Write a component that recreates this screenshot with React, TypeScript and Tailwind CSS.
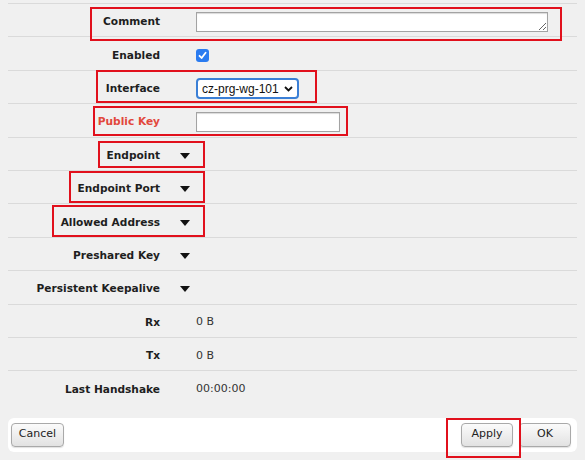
import React from 'react';

const Triangle = () => (
  <svg width="10" height="6" viewBox="0 0 10 6" className="block">
    <path d="M0 0 L10 0 L5 6 Z" fill="#111" />
  </svg>
);

interface RowProps {
  label: string;
  red?: boolean;
  children?: React.ReactNode;
  expand?: boolean;
}

const Row: React.FC<RowProps> = ({ label, red, children, expand }) => (
  <div className="h-[33.4px] border-t border-[#dadada] flex items-center pt-[4px]">
    <div className={`w-[152px] shrink-0 text-right font-bold text-[10.6px] ${red ? 'text-[#e2483c]' : 'text-[#1e1e1e]'}`}>
      {label}
    </div>
    {expand ? (
      <div className="ml-[20px]"><Triangle /></div>
    ) : (
      <div className="ml-[36px] flex items-center">{children}</div>
    )}
  </div>
);

const Btn: React.FC<{ children: React.ReactNode; className?: string }> = ({ children, className }) => (
  <button
    type="button"
    className={`h-[24px] rounded-[4px] border border-[#a9a9a9] bg-gradient-to-b from-[#fbfbfb] to-[#e2e2e2] text-[11px] text-[#222] shadow-[0_1px_1px_rgba(0,0,0,0.12)] ${className ?? ''}`}
  >
    {children}
  </button>
);

const Box: React.FC<{ className: string }> = ({ className }) => (
  <div className={`absolute border-2 border-[#e1101c] pointer-events-none ${className}`} />
);

export default function App() {
  return (
    <div
      className="relative w-[585px] h-[460px] bg-[#f0f0f0] px-2 pt-[3px] overflow-hidden"
      style={{ fontFamily: '"DejaVu Sans", Verdana, sans-serif' }}
    >
      <Row label="Comment">
        <textarea
          rows={1}
          className="block w-[352px] h-[20px] bg-white border border-[#a3a3a3] shadow-[inset_0_1px_1px_rgba(0,0,0,0.15)] resize"
        />
      </Row>
      <Row label="Enabled">
        <div className="w-[13px] h-[13px] rounded-[3px] bg-[#2a7bf0] flex items-center justify-center">
          <svg width="9" height="9" viewBox="0 0 9 9">
            <path d="M1.5 4.8 L3.6 7 L7.6 1.8" fill="none" stroke="#fff" strokeWidth="1.8" strokeLinecap="round" strokeLinejoin="round" />
          </svg>
        </div>
      </Row>
      <Row label="Interface">
        <div className="w-[103px] h-[21px] rounded-[4px] border-2 border-[#3a7fd6] bg-white flex items-center justify-between pl-[4px] pr-[4px]">
          <span className="text-[12px] text-[#111]" style={{ fontFamily: '"Liberation Sans", Arial, sans-serif' }}>cz-prg-wg-101</span>
          <svg width="9" height="6" viewBox="0 0 9 6">
            <path d="M1 1 L4.5 4.5 L8 1" fill="none" stroke="#111" strokeWidth="1.8" />
          </svg>
        </div>
      </Row>
      <Row label="Public Key" red>
        <input
          type="text"
          className="block w-[144px] h-[20px] bg-white border border-[#a3a3a3] shadow-[inset_0_1px_1px_rgba(0,0,0,0.15)]"
        />
      </Row>
      <Row label="Endpoint" expand />
      <Row label="Endpoint Port" expand />
      <Row label="Allowed Address" expand />
      <Row label="Preshared Key" expand />
      <Row label="Persistent Keepalive" expand />
      <Row label="Rx"><span className="text-[11px] text-[#333]">0 B</span></Row>
      <Row label="Tx"><span className="text-[11px] text-[#333]">0 B</span></Row>
      <Row label="Last Handshake"><span className="text-[11px] text-[#333]">00:00:00</span></Row>

      <div className="mt-[14px] h-[34px] bg-white rounded-[6px] flex items-center pl-[3px] pr-[6px]">
        <Btn className="w-[53px]">Cancel</Btn>
        <div className="flex-1" />
        <Btn className="w-[52px]">Apply</Btn>
        <Btn className="w-[52px] ml-[6px]">OK</Btn>
      </div>

      <Box className="left-[90px] top-[7px] w-[472px] h-[34px]" />
      <Box className="left-[96px] top-[70px] w-[221px] h-[33px]" />
      <Box className="left-[93px] top-[106px] w-[255px] h-[30px]" />
      <Box className="left-[98px] top-[141px] w-[107px] h-[27px]" />
      <Box className="left-[69px] top-[171px] w-[136px] h-[32px]" />
      <Box className="left-[52px] top-[205px] w-[153px] h-[32px]" />
      <Box className="left-[446px] top-[418px] w-[75px] h-[40px]" />
    </div>
  );
}
